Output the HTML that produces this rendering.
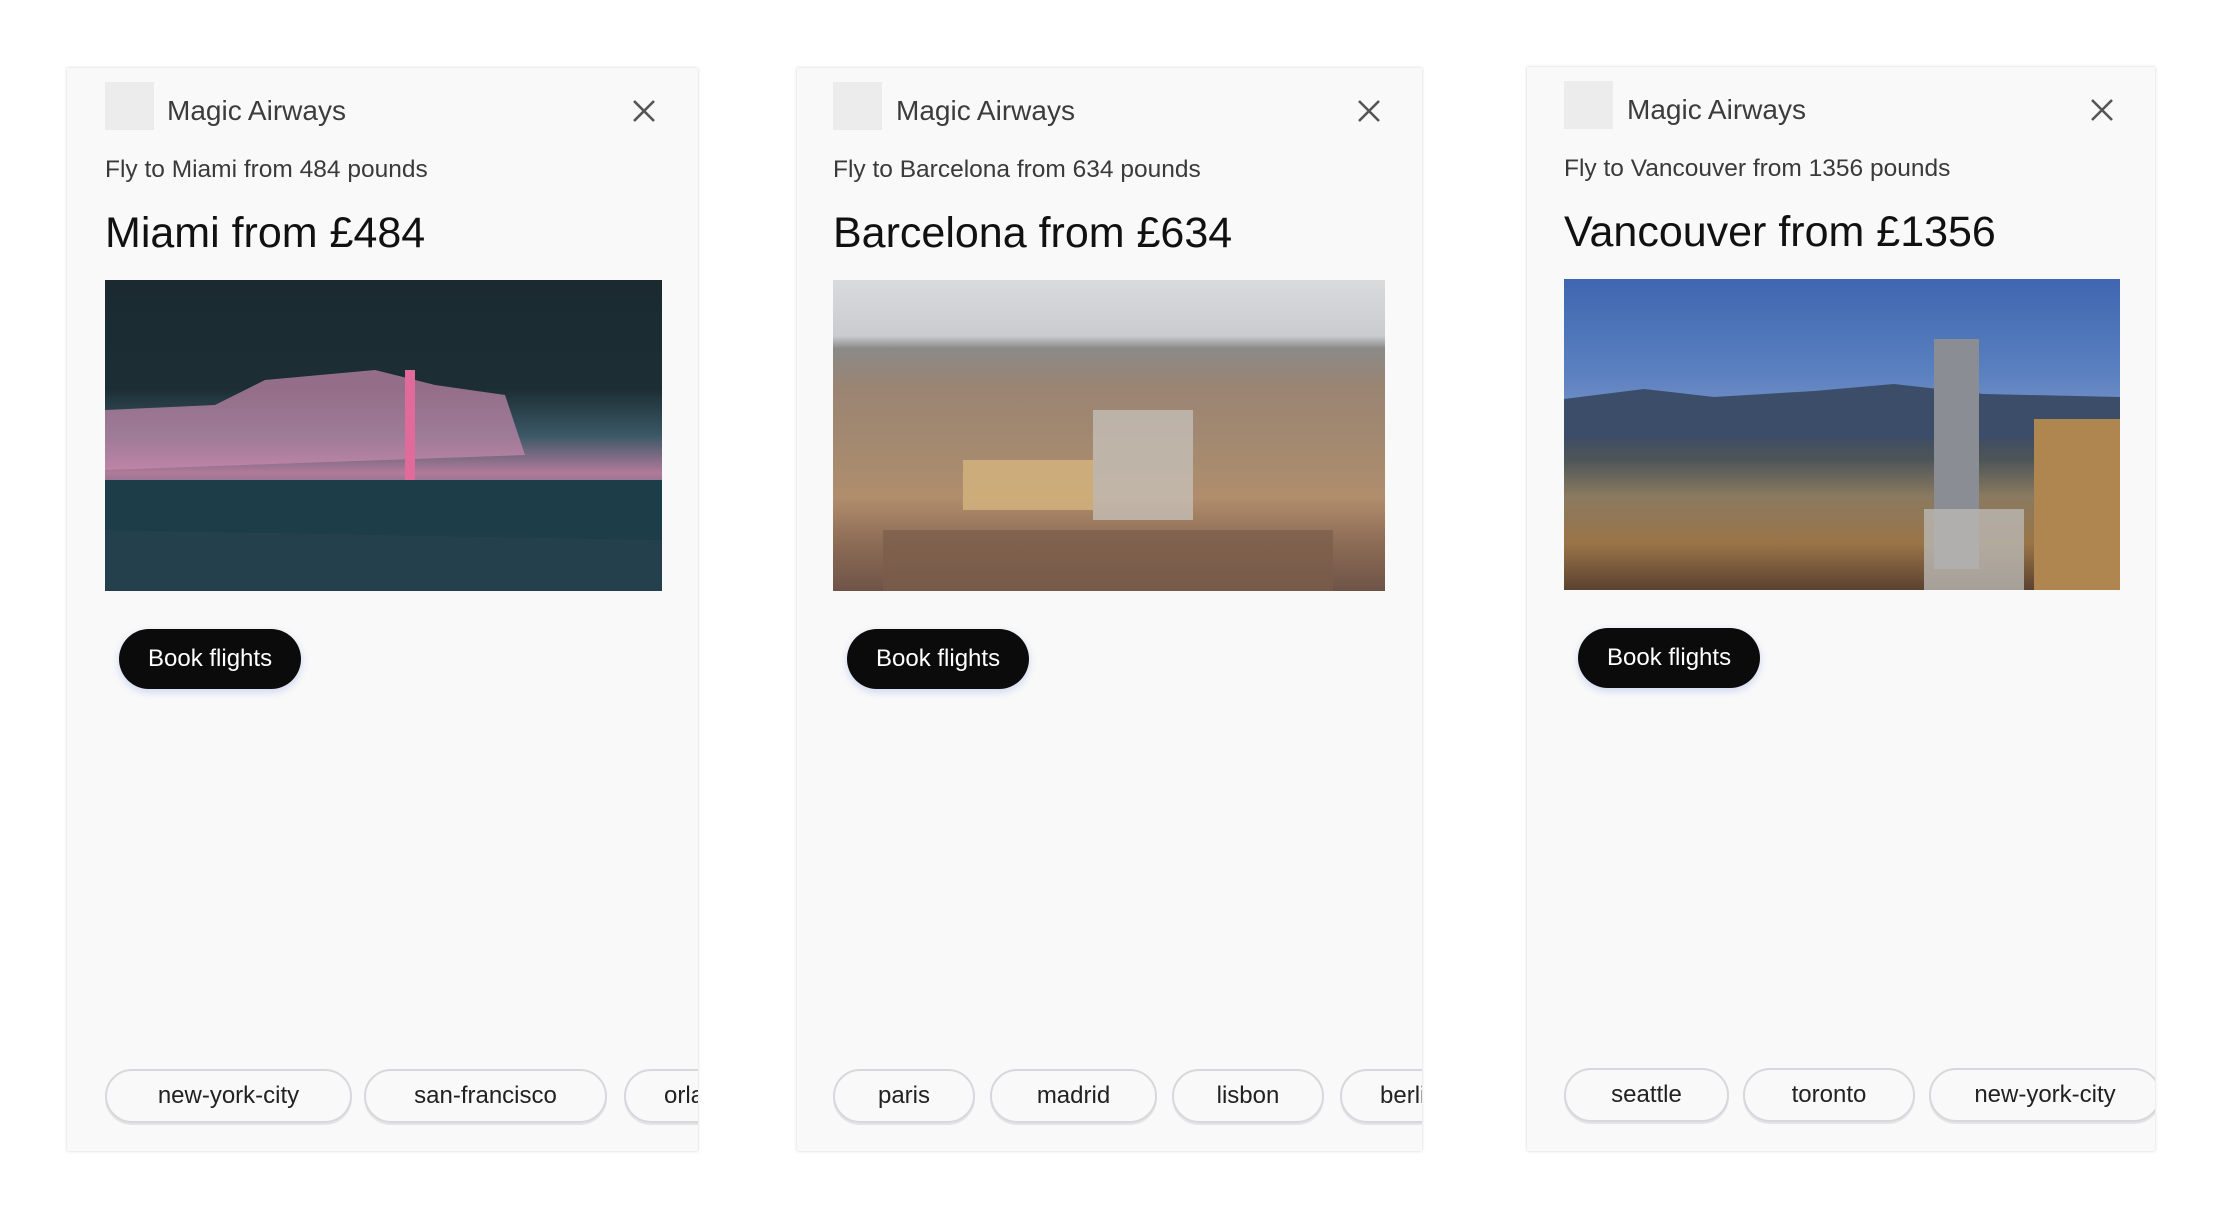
<!DOCTYPE html>
<html><head><meta charset="utf-8"><style>
*{box-sizing:border-box;margin:0;padding:0}
body{width:2226px;height:1218px;background:#fff;position:relative;overflow:hidden;font-family:"Liberation Sans",Arial,sans-serif}
.card{position:absolute;top:68px;height:1090px;background:#f9f9f9;box-shadow:0 0 3px rgba(0,0,0,.18);overflow:hidden}
.logo{position:absolute;left:38px;top:14px;width:49px;height:48px;background:#ececec}
.brand{position:absolute;left:99px;top:27px;font-size:28px;color:#3c3c3c}
.close{position:absolute;top:31px;width:24px;height:24px}
.sub{position:absolute;left:38px;top:88px;font-size:24.5px;color:#3a3a3a}
.h{position:absolute;left:38px;top:141px;font-size:43px;color:#111}
.img{position:absolute;left:38px;top:212px;width:558px;height:311px;overflow:hidden}
.btn{position:absolute;left:52px;top:561px;height:60px;padding:0 29px;line-height:60px;border-radius:30px;background:#0b0b0b;color:#fff;font-size:24px;box-shadow:0 3px 8px rgba(80,110,220,.25)}
.chip{position:absolute;top:1001px;height:54px;line-height:50px;border:2px solid #d8d8dc;border-radius:27px;font-size:24px;color:#222;text-align:center;white-space:nowrap;overflow:hidden;box-shadow:0 2px 0 #e4e4e8}
</style></head><body>

<div class="card" style="left:67px;width:631px;height:1083px">
<div class="logo"></div><div class="brand" style="left:100px">Magic Airways</div>
<svg class="close" style="left:565px" viewBox="0 0 24 24"><path d="M2 2L22 22M22 2L2 22" stroke="#555" stroke-width="2.6"/></svg>
<div class="sub">Fly to Miami from 484 pounds</div>
<div class="h">Miami from £484</div>
<div class="img" style="width:557px;background:linear-gradient(180deg,#1a2a30 0%,#1c2e34 35%,#3b5866 50%,#b07a9a 62%,#5a6b82 72%,#1e3a44 80%,#1b2c36 100%)">
<svg width="558" height="314" style="position:absolute;left:0;top:0"><polygon points="0,130 110,125 160,100 270,90 330,105 400,115 420,175 0,190" fill="#c88aac" opacity=".7"/><rect x="300" y="90" width="10" height="120" fill="#e06a9a"/><polygon points="0,200 558,200 558,260 0,250" fill="#1d3d48"/><polygon points="0,250 558,260 558,314 0,314" fill="#24404d"/></svg>
</div>
<div class="btn">Book flights</div>
<div class="chip" style="left:38px;width:247px">new-york-city</div>
<div class="chip" style="left:297px;width:243px">san-francisco</div>
<div class="chip" style="left:557px;width:120px;text-align:left;padding-left:38px">orlando</div>
</div>

<div class="card" style="left:797px;width:625px;height:1083px">
<div class="logo" style="left:36px"></div><div class="brand">Magic Airways</div>
<svg class="close" style="left:560px" viewBox="0 0 24 24"><path d="M2 2L22 22M22 2L2 22" stroke="#555" stroke-width="2.6"/></svg>
<div class="sub" style="left:36px">Fly to Barcelona from 634 pounds</div>
<div class="h" style="left:36px">Barcelona from £634</div>
<div class="img" style="left:36px;width:552px;background:linear-gradient(180deg,#d9dadc 0%,#c9ccd0 18%,#8b8a88 22%,#9a8472 35%,#a58a70 55%,#b08d6c 70%,#8c6b55 85%,#6e5448 100%)">
<svg width="559" height="314" style="position:absolute;left:0;top:0"><rect x="130" y="180" width="130" height="50" fill="#d5b47e" opacity=".8"/><rect x="260" y="130" width="100" height="110" fill="#c9c6c0" opacity=".7"/><rect x="50" y="250" width="450" height="64" fill="#7a5c4a" opacity=".7"/></svg>
</div>
<div class="btn" style="left:50px">Book flights</div>
<div class="chip" style="left:36px;width:142px">paris</div>
<div class="chip" style="left:193px;width:167px">madrid</div>
<div class="chip" style="left:375px;width:152px">lisbon</div>
<div class="chip" style="left:543px;width:120px;text-align:left;padding-left:38px">berlin</div>
</div>

<div class="card" style="left:1527px;width:628px;top:67px;height:1084px">
<div class="logo" style="left:37px"></div><div class="brand" style="left:100px">Magic Airways</div>
<svg class="close" style="left:563px" viewBox="0 0 24 24"><path d="M2 2L22 22M22 2L2 22" stroke="#555" stroke-width="2.6"/></svg>
<div class="sub" style="left:37px">Fly to Vancouver from 1356 pounds</div>
<div class="h" style="left:37px">Vancouver from £1356</div>
<div class="img" style="left:37px;width:556px;background:linear-gradient(180deg,#3f66b0 0%,#5a80c0 30%,#6d8cc4 40%,#3a4a66 48%,#4d5558 58%,#8a7a60 70%,#9a7448 85%,#5a4230 100%)">
<svg width="557" height="314" style="position:absolute;left:0;top:0"><polygon points="0,120 80,110 150,118 250,112 330,105 420,115 557,118 557,160 0,160" fill="#3c4d6a"/><rect x="370" y="60" width="45" height="230" fill="#8a8e94"/><rect x="360" y="230" width="100" height="84" fill="#b9b8b4" opacity=".8"/><rect x="470" y="140" width="87" height="174" fill="#b08650"/></svg>
</div>
<div class="btn" style="left:51px">Book flights</div>
<div class="chip" style="left:37px;width:165px">seattle</div>
<div class="chip" style="left:216px;width:172px">toronto</div>
<div class="chip" style="left:402px;width:232px">new-york-city</div>
</div>
</body></html>
